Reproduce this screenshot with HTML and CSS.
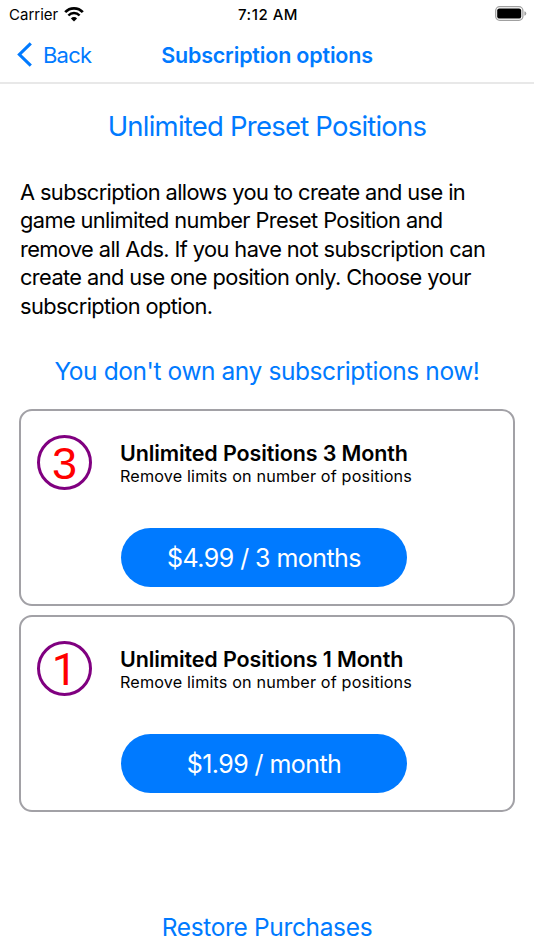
FILE: index.html
```html
<!DOCTYPE html>
<html lang="en">
<head>
  <meta charset="UTF-8" />
  <meta name="viewport" content="width=device-width, initial-scale=1.0"/>
  <title>Subscription options</title>
  <link rel="stylesheet" href="styles.css">
</head>
<body>
  <div class="status-bar">
    <div class="carrier">
      <span>Carrier</span>
      <svg class="wifi" width="20" height="15" viewBox="0 0 20 15">
        <path d="M1.2 5.2 A12 12 0 0 1 18.8 5.2" fill="none" stroke="#000" stroke-width="2.7"/>
        <path d="M4.4 8.5 A7.7 7.7 0 0 1 15.6 8.5" fill="none" stroke="#000" stroke-width="2.5"/>
        <path d="M10 14.6 L6.9 11.4 A4.4 4.4 0 0 1 13.1 11.4 Z" fill="#000"/>
      </svg>
    </div>
    <span class="time">7:12 AM</span>
    <div class="battery">
      <svg width="32" height="16" viewBox="0 0 32 16">
        <rect x="0.7" y="0.7" width="27.2" height="13.6" rx="4" fill="none" stroke="#a0a0a0" stroke-width="1.3"/>
        <rect x="2.2" y="2.4" width="24" height="10.2" rx="2.2" fill="#000"/>
        <path d="M29.4 5.2 Q31.3 5.8 31.3 7.5 Q31.3 9.2 29.4 9.8 Z" fill="#a0a0a0"/>
      </svg>
    </div>
  </div>

  <header class="nav-bar">
    <a class="back">
      <svg width="16" height="26" viewBox="0 0 16 26">
        <path d="M14.8 1.4 L3.4 12.5 L14.8 23.6" fill="none" stroke="#007aff" stroke-width="3.1"/>
      </svg>
      <span>Back</span>
    </a>
    <h1>Subscription options</h1>
  </header>

  <main>
    <h2>Unlimited Preset Positions</h2>
    <p class="description">
      A subscription allows you to create and use in<br>
      game unlimited number Preset Position and<br>
      remove all Ads. If you have not subscription can<br>
      create and use one position only. Choose your<br>
      subscription option.
    </p>
    <p class="owned">You don't own any subscriptions now!</p>

    <section class="card">
      <div class="badge">3</div>
      <div class="info">
        <h3>Unlimited Positions 3 Month</h3>
        <p>Remove limits on number of positions</p>
        <button class="buy">$4.99 / 3 months</button>
      </div>
    </section>

    <section class="card">
      <div class="badge one">1</div>
      <div class="info">
        <h3>Unlimited Positions 1 Month</h3>
        <p>Remove limits on number of positions</p>
        <button class="buy">$1.99 / month</button>
      </div>
    </section>

    <button class="restore">Restore Purchases</button>
  </main>
</body>
</html>
```

FILE: styles.css
```css
* {
  box-sizing: border-box;
}

body {
  margin: 0;
  height: 950px;
  overflow: hidden;
  background: #fff;
  color: #000;
  font-family: Inter, "Liberation Sans", sans-serif;
}

h1, h2, h3, p {
  margin: 0;
  font-weight: 400;
  white-space: nowrap;
}

button {
  border: none;
  padding: 0;
  background: none;
  font-family: inherit;
  cursor: pointer;
}

.status-bar {
  display: grid;
  grid-template-columns: 1fr auto 1fr;
  align-items: center;
  height: 28px;
  padding: 0 7px 0 9px;
  font-size: 15px;
}

.carrier {
  display: flex;
  align-items: center;
  gap: 6px;
}

.time {
  font-weight: 500;
  letter-spacing: 0.5px;
}

.battery {
  display: flex;
  justify-content: flex-end;
}

.nav-bar {
  display: grid;
  grid-template-columns: 1fr auto 1fr;
  align-items: center;
  height: 56px;
  padding: 0 16px;
  border-bottom: 2px solid #e8e8e8;
  color: #007aff;
}

.back {
  display: flex;
  align-items: center;
  gap: 11px;
  font-size: 22px;
  letter-spacing: -0.8px;
}

h1 {
  font-size: 21.5px;
  font-weight: 600;
  letter-spacing: -0.18px;
}

main {
  display: flex;
  flex-direction: column;
  padding: 24px 19px 0;
}

h2 {
  color: #007aff;
  font-size: 27.5px;
  letter-spacing: -0.78px;
  line-height: 36px;
  text-align: center;
}

.description {
  margin: 34px 0 0 1px;
  font-size: 21.8px;
  letter-spacing: -0.6px;
  line-height: 28.4px;
}

.owned {
  margin: 33px 0 20px;
  color: #007aff;
  font-size: 24.5px;
  letter-spacing: -0.42px;
  line-height: 36px;
  text-align: center;
}

.card {
  display: flex;
  height: 197px;
  margin-bottom: 9px;
  padding: 24px 16px;
  border: 2px solid #a2a1a6;
  border-radius: 13px;
}

.badge {
  display: flex;
  align-items: center;
  justify-content: center;
  width: 55px;
  height: 55px;
  margin-right: 28px;
  padding-top: 2px;
  border: 3px solid purple;
  border-radius: 50%;
  color: red;
  font-family: "Liberation Sans", sans-serif;
  font-size: 45px;
}

/* plain 1 without a foot */
.badge.one {
  font-family: Roboto, sans-serif;
}

.info {
  display: flex;
  flex-direction: column;
  width: 287px;
}

.info h3 {
  margin-top: 4px;
  font-size: 21.5px;
  font-weight: 600;
  letter-spacing: -0.12px;
  line-height: 28px;
}

.info p {
  font-size: 16.2px;
  letter-spacing: 0.15px;
  line-height: 19px;
}

.buy {
  flex-shrink: 0;
  height: 59px;
  margin: 42px 0 0 1px;
  border-radius: 30px;
  background: #007aff;
  color: #fff;
  font-size: 25px;
  letter-spacing: -0.56px;
}

.restore {
  margin-top: 88px;
  color: #007aff;
  font-size: 24.5px;
  letter-spacing: -0.35px;
  line-height: 36px;
}
```
